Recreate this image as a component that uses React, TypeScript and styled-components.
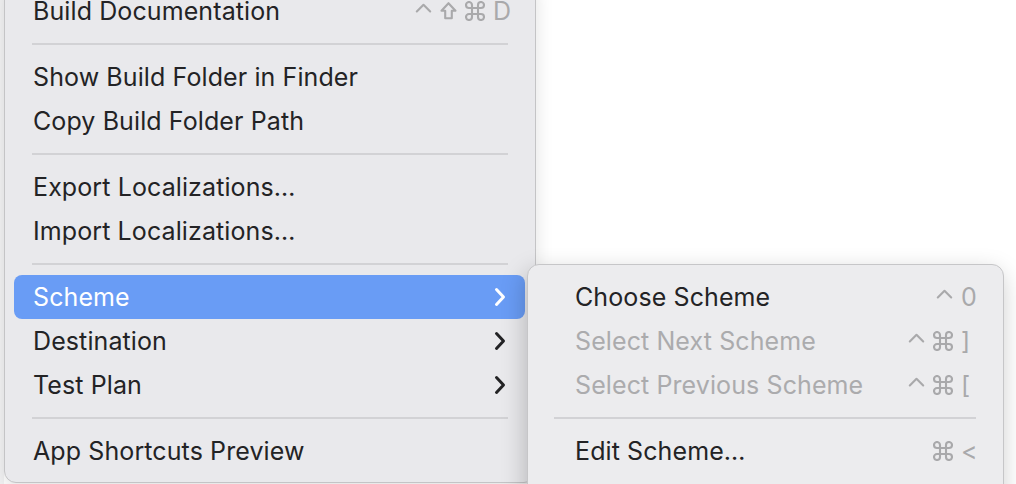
import React from 'react'
import styled, { createGlobalStyle } from 'styled-components'

type Mod = 'ctrl' | 'shift' | 'cmd'

type Item =
  | { kind: 'sep' }
  | {
      kind: 'item'
      label: string
      mods?: Mod[]
      keyChar?: string
      sub?: boolean
      active?: boolean
      disabled?: boolean
    }

const mainItems: Item[] = [
  { kind: 'item', label: 'Build Documentation', mods: ['ctrl', 'shift', 'cmd'], keyChar: 'D' },
  { kind: 'sep' },
  { kind: 'item', label: 'Show Build Folder in Finder' },
  { kind: 'item', label: 'Copy Build Folder Path' },
  { kind: 'sep' },
  { kind: 'item', label: 'Export Localizations…' },
  { kind: 'item', label: 'Import Localizations…' },
  { kind: 'sep' },
  { kind: 'item', label: 'Scheme', sub: true, active: true },
  { kind: 'item', label: 'Destination', sub: true },
  { kind: 'item', label: 'Test Plan', sub: true },
  { kind: 'sep' },
  { kind: 'item', label: 'App Shortcuts Preview' },
]

const schemeItems: Item[] = [
  { kind: 'item', label: 'Choose Scheme', mods: ['ctrl'], keyChar: '0' },
  { kind: 'item', label: 'Select Next Scheme', mods: ['ctrl', 'cmd'], keyChar: ']', disabled: true },
  { kind: 'item', label: 'Select Previous Scheme', mods: ['ctrl', 'cmd'], keyChar: '[', disabled: true },
  { kind: 'sep' },
  { kind: 'item', label: 'Edit Scheme…', mods: ['cmd'], keyChar: '<' },
]

// modifier key glyphs, drawn to match the macOS menu symbols
function ModGlyph({ mod }: { mod: Mod }) {
  if (mod === 'ctrl') {
    return (
      <GlyphIcon width="17" height="20" viewBox="0 0 17 20">
        <path d="M1.8 10.5 L8.5 3.8 L15.2 10.5" />
      </GlyphIcon>
    )
  }
  if (mod === 'shift') {
    return (
      <GlyphIcon width="17" height="20" viewBox="0 0 17 20">
        <path d="M8.5 2.2 L15.5 9.8 H11.8 V17.2 H5.2 V9.8 H1.5 Z" />
      </GlyphIcon>
    )
  }
  return (
    <GlyphIcon width="20" height="20" viewBox="2 2 20 20">
      <path d="M15 6v12a3 3 0 1 0 3-3H6a3 3 0 1 0 3 3V6a3 3 0 1 0-3 3h12a3 3 0 1 0-3-3" />
    </GlyphIcon>
  )
}

function Chevron({ light }: { light?: boolean }) {
  return (
    <ChevronIcon width="16" height="20" viewBox="0 0 16 20">
      <path
        d="M4.5 2.5 L11.5 10 L4.5 17.5"
        fill="none"
        stroke={light ? '#ffffff' : '#232325'}
        strokeWidth="3"
        strokeLinecap="round"
        strokeLinejoin="round"
      />
    </ChevronIcon>
  )
}

function MenuList({ items, sub }: { items: Item[]; sub?: boolean }) {
  return (
    <>
      {items.map((item, i) =>
        item.kind === 'sep' ? (
          <Separator key={i} $sub={sub}>
            <Line />
          </Separator>
        ) : (
          <Row key={i} $active={item.active} $disabled={item.disabled} $sub={sub}>
            <Label>{item.label}</Label>
            {item.keyChar && (
              <Shortcut>
                {item.mods?.map((m, j) => (
                  <ModGlyph key={j} mod={m} />
                ))}
                <KeyChar>{item.keyChar}</KeyChar>
              </Shortcut>
            )}
            {item.sub && <Chevron light={item.active} />}
          </Row>
        )
      )}
    </>
  )
}

export default function App() {
  return (
    <>
      <GlobalStyle />
      <Page>
        <EditorEdge />
        <MainMenu>
          <MenuList items={mainItems} />
        </MainMenu>
        <SubMenu>
          <MenuList items={schemeItems} sub />
        </SubMenu>
      </Page>
    </>
  )
}

const GlobalStyle = createGlobalStyle`
  html, body {
    margin: 0;
    padding: 0;
    background: #ffffff;
    overflow: hidden;
  }
  body {
    font-family: Inter, "Noto Sans", "Liberation Sans", sans-serif;
    -webkit-font-smoothing: antialiased;
  }
`

const Page = styled.div`
  position: relative;
  display: flex;
  align-items: flex-start;
  width: 1016px;
  height: 484px;
  overflow: hidden;
  background: #ffffff;
`

const EditorEdge = styled.div`
  width: 4px;
  height: 484px;
  background: #f3f3f4;
  flex-shrink: 0;
`

const MainMenu = styled.div`
  width: 532px;
  box-sizing: border-box;
  margin-top: -22px;
  padding: 10px 10px 9px 9px;
  background: #e9e9ec;
  border: 1px solid #c4c4c6;
  border-radius: 12px;
  box-shadow: 0 6px 18px rgba(0, 0, 0, 0.12);
  display: flex;
  flex-direction: column;
`

const SubMenu = styled.div`
  position: absolute;
  left: 527px;
  top: 264px;
  width: 477px;
  height: 260px;
  box-sizing: border-box;
  padding: 10px;
  background: #ececee;
  border: 1px solid #c6c6c8;
  border-radius: 12px;
  box-shadow: -2px 8px 24px rgba(0, 0, 0, 0.22);
  display: flex;
  flex-direction: column;
`

const Row = styled.div<{ $active?: boolean; $disabled?: boolean; $sub?: boolean }>`
  height: 44px;
  flex-shrink: 0;
  display: flex;
  align-items: center;
  padding: ${(p) => (p.$sub ? '0 15px 0 37px' : '0 15px 0 19px')};
  border-radius: 8px;
  font-size: 25px;
  letter-spacing: 0.1px;
  color: ${(p) => (p.$active ? '#ffffff' : p.$disabled ? '#ababad' : '#232325')};
  background: ${(p) => (p.$active ? '#699cf5' : 'transparent')};
`

const Label = styled.span`
  flex: 1;
  white-space: nowrap;
`

const Shortcut = styled.span`
  display: flex;
  align-items: center;
  gap: 8px;
  color: #a9a9ab;
`

const GlyphIcon = styled.svg`
  display: block;
  fill: none;
  stroke: #a9a9ab;
  stroke-width: 2.1;
  stroke-linecap: round;
  stroke-linejoin: round;
`

const KeyChar = styled.span`
  width: 17px;
  text-align: left;
`

const ChevronIcon = styled.svg`
  display: block;
  margin-right: 2px;
`

const Separator = styled.div<{ $sub?: boolean }>`
  height: 22px;
  flex-shrink: 0;
  display: flex;
  align-items: center;
  padding: ${(p) => (p.$sub ? '0 17px 0 16px' : '0 17px 0 18px')};
`

const Line = styled.div`
  flex: 1;
  height: 2px;
  background: #d2d2d5;
`
